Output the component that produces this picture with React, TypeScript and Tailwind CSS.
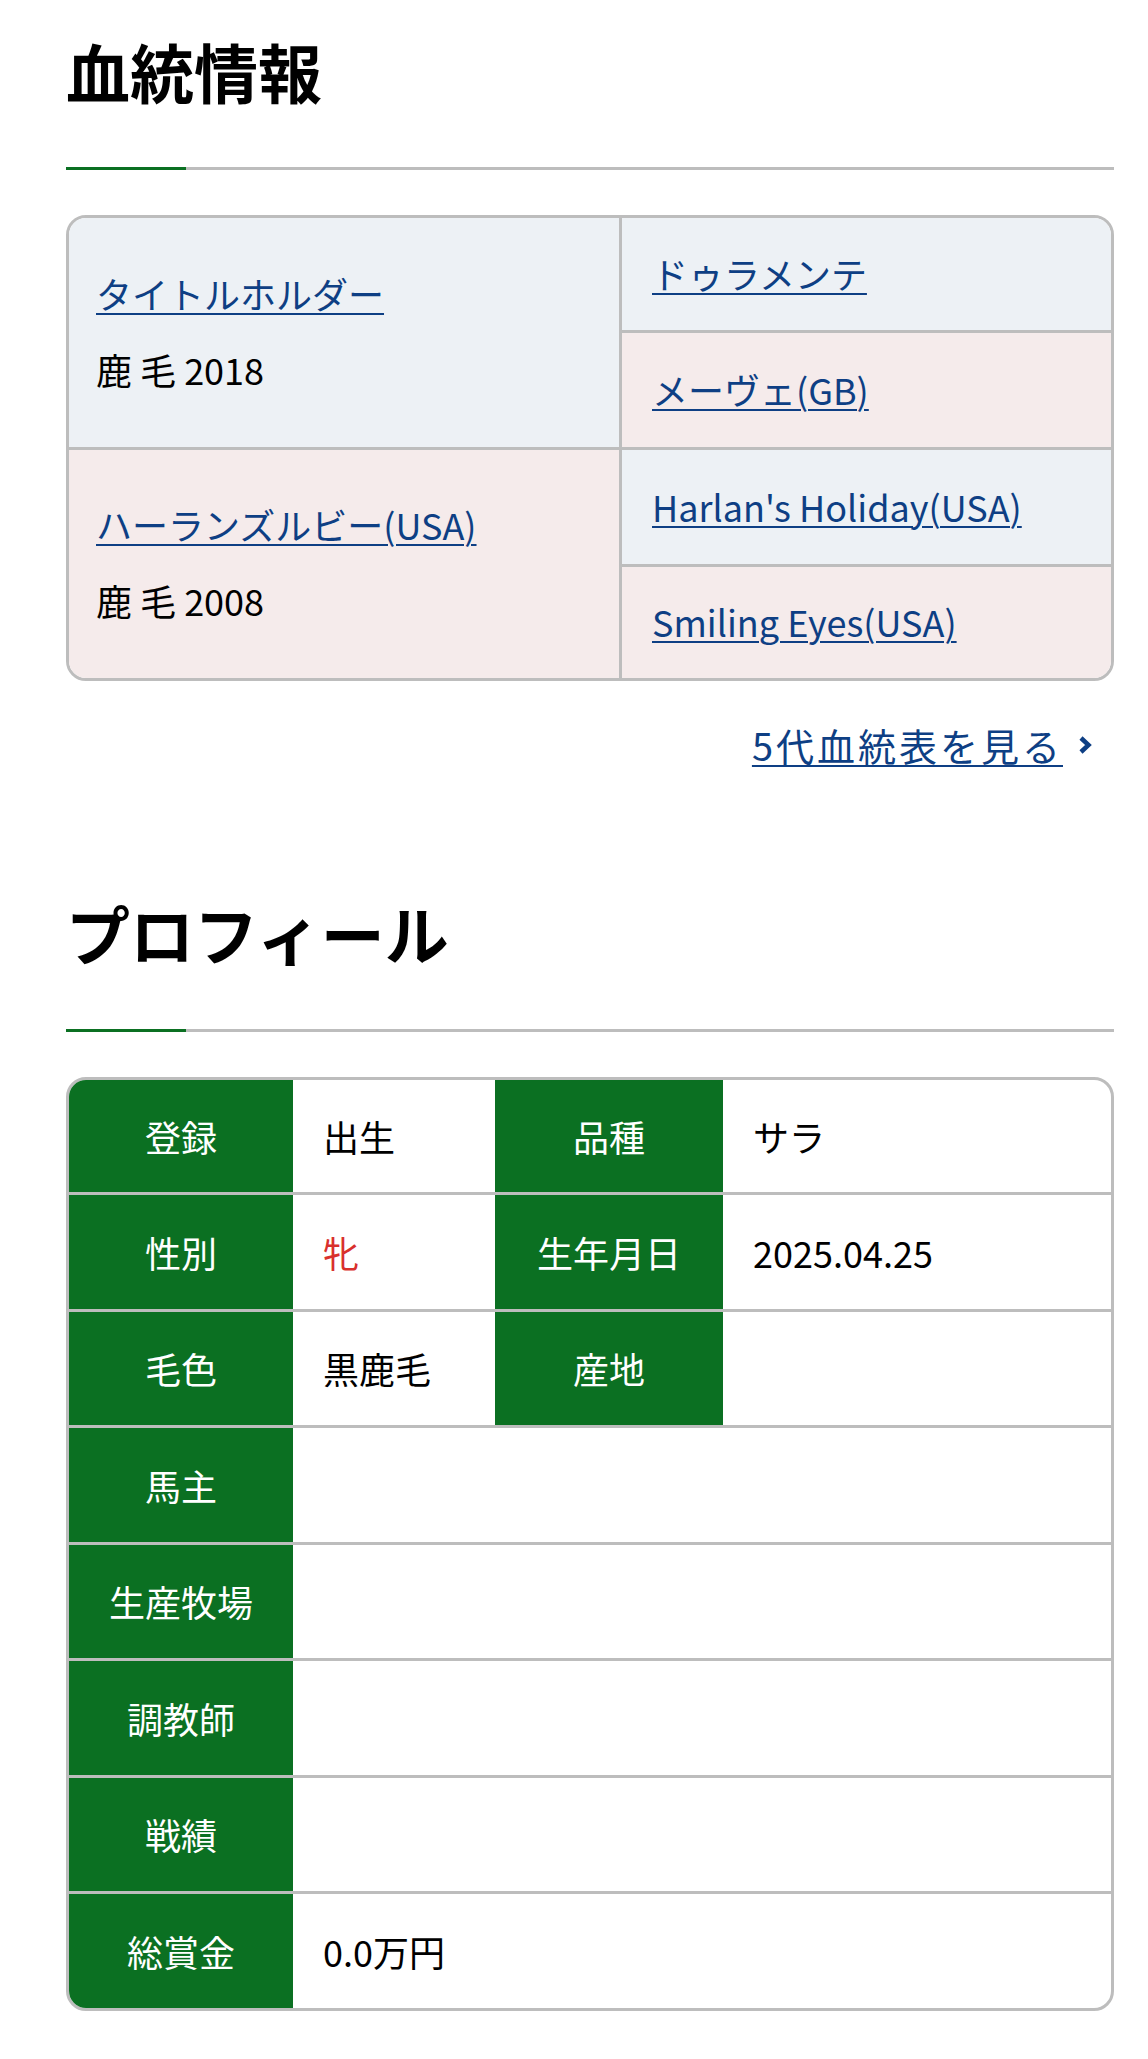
import React from "react"

const font = { fontFamily: '"Noto Sans CJK JP", "Noto Sans", sans-serif' }

function SectionTitle({ title }: { title: string }) {
  return (
    <div>
      <h2 className="text-[64px] font-bold leading-[96px] text-black">{title}</h2>
      <div className="mt-[49px] flex h-[3px]">
        <div className="w-[120px] bg-[#0b7022]" />
        <div className="flex-1 bg-[#bdbdbd]" />
      </div>
    </div>
  )
}

function HorseLink({ children }: { children: React.ReactNode }) {
  return (
    <a href="#" className="text-[36px] leading-[54px] text-[#0e3f84] underline decoration-2 underline-offset-[4px]">
      {children}
    </a>
  )
}

const profileRows: { label: string; value: string; red?: boolean; label2?: string; value2?: string }[] = [
  { label: "登録", value: "出生", label2: "品種", value2: "サラ" },
  { label: "性別", value: "牝", red: true, label2: "生年月日", value2: "2025.04.25" },
  { label: "毛色", value: "黒鹿毛", label2: "産地", value2: "" },
  { label: "馬主", value: "" },
  { label: "生産牧場", value: "" },
  { label: "調教師", value: "" },
  { label: "戦績", value: "" },
  { label: "総賞金", value: "0.0万円" },
]

export default function App() {
  return (
    <div className="min-h-[2059px] bg-white pl-[66px] pr-[34px] pt-[22px] text-black" style={font}>
      <SectionTitle title="血統情報" />

      {/* pedigree: heights are border-box, so bordered cells add 3px */}
      <div className="mt-[45px] flex overflow-hidden rounded-[20px] border-[3px] border-[#bdbdbd]">
        <div className="flex w-[550px] shrink-0 flex-col">
          <div className="flex h-[229px] flex-col justify-center bg-[#edf1f5] pb-[4px] pl-[27px]">
            <div><HorseLink>タイトルホルダー</HorseLink></div>
            <div className="mt-[22px] text-[36px] leading-[54px]">鹿 毛 2018</div>
          </div>
          <div className="flex h-[231px] flex-col justify-center border-t-[3px] border-[#bdbdbd] bg-[#f5ebeb] pb-[4px] pl-[27px]">
            <div><HorseLink>ハーランズルビー(USA)</HorseLink></div>
            <div className="mt-[22px] text-[36px] leading-[54px]">鹿 毛 2008</div>
          </div>
        </div>
        <div className="flex flex-1 flex-col border-l-[3px] border-[#bdbdbd]">
          <div className="flex h-[112px] items-center bg-[#edf1f5] pb-[3px] pl-[30px]">
            <HorseLink>ドゥラメンテ</HorseLink>
          </div>
          <div className="flex h-[117px] items-center border-t-[3px] border-[#bdbdbd] bg-[#f5ebeb] pb-[3px] pl-[30px]">
            <HorseLink>メーヴェ(GB)</HorseLink>
          </div>
          <div className="flex h-[117px] items-center border-t-[3px] border-[#bdbdbd] bg-[#edf1f5] pb-[3px] pl-[30px]">
            <HorseLink>Harlan's Holiday(USA)</HorseLink>
          </div>
          <div className="flex h-[114px] items-center border-t-[3px] border-[#bdbdbd] bg-[#f5ebeb] pb-[3px] pl-[30px]">
            <HorseLink>Smiling Eyes(USA)</HorseLink>
          </div>
        </div>
      </div>

      <div className="mt-[37px] flex h-[54px] items-center justify-end pr-[21px]">
        <a href="#" className="text-[38px] leading-[54px] tracking-[3px] text-[#0e3f84] underline decoration-2 underline-offset-[4px]">
          5代血統表を見る
        </a>
        <svg width="16" height="20" viewBox="0 0 16 20" className="ml-[14px]">
          <polyline points="4,3 11.5,10 4,17" fill="none" stroke="#0e3f84" strokeWidth="4.5" />
        </svg>
      </div>

      <div className="mt-[112px]">
        <SectionTitle title="プロフィール" />
      </div>

      {/* profile */}
      <div className="mt-[45px] overflow-hidden rounded-[20px] border-[3px] border-[#bdbdbd]">
        {profileRows.map((row, i) => (
          <div
            key={row.label}
            className={`flex text-[36px] ${i > 0 ? "h-[116.5px] border-t-[3px] border-[#bdbdbd]" : "h-[112px]"}`}
          >
            <div className="flex w-[224px] shrink-0 items-center justify-center bg-[#0b7022] text-white">{row.label}</div>
            {row.label2 ? (
              <>
                <div className={`flex w-[202px] shrink-0 items-center pl-[30px] ${row.red ? "text-[#d9302c]" : ""}`}>
                  {row.value}
                </div>
                <div className="flex w-[228px] shrink-0 items-center justify-center bg-[#0b7022] text-white">{row.label2}</div>
                <div className="flex flex-1 items-center pl-[30px]">{row.value2}</div>
              </>
            ) : (
              <div className="flex flex-1 items-center pl-[30px]">{row.value}</div>
            )}
          </div>
        ))}
      </div>
    </div>
  )
}
